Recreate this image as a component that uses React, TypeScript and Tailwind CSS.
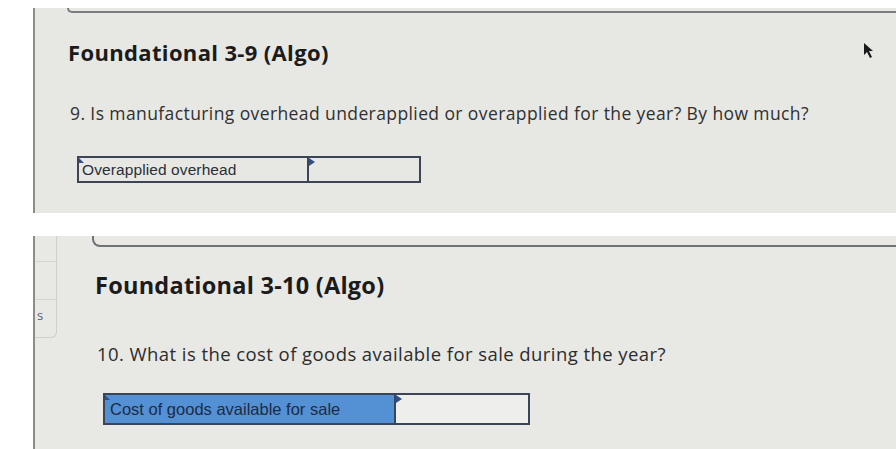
const font = { fontFamily: '"Open Sans", Lato, Arial, sans-serif' };

function AnswerRow({
  label,
  labelWidth,
  valueWidth,
  highlighted,
  size,
}: {
  label: string;
  labelWidth: string;
  valueWidth: string;
  highlighted?: boolean;
  size: string;
}) {
  return (
    <div className="flex border-2 border-[#3b4556]">
      <div
        className={`relative flex items-center pl-[3px] ${labelWidth} ${size} ${
          highlighted ? 'bg-[#5490d4] pl-[5px] text-[#1d2b44]' : 'text-[#2a2f38]'
        }`}
        style={{ fontFamily: '"Liberation Sans", Arial, sans-serif' }}
      >
        <span className="absolute left-0 top-0 h-0 w-0 border-l-[5px] border-t-[5px] border-l-[#2f4f8a] border-t-transparent" />
        {label}
      </div>
      <div className={`relative border-l-2 border-[#3b4556] ${valueWidth} ${highlighted ? 'bg-[#eeeeec]' : ''}`}>
        <span className="absolute left-0 top-0 h-0 w-0 border-b-[4px] border-l-[6px] border-t-[4px] border-b-transparent border-l-[#2f4f8a] border-t-transparent" />
      </div>
    </div>
  );
}

export default function App() {
  return (
    <div className="relative flex h-[449px] w-[896px] flex-col overflow-hidden bg-white" style={font}>
      {/* first question */}
      <section className="ml-[33px] mt-[8px] flex h-[205px] flex-col border-l-2 border-[#8c8c8a] bg-[#e7e7e3]">
        <div className="ml-[32px] h-[5px] rounded-bl-[7px] border-b-2 border-l-2 border-[#7b7d80]" />
        <h2 className="ml-[33px] mt-[26px] text-[22px] font-bold leading-[26px] tracking-[0.35px] text-[#1b1b1b]">
          Foundational 3-9 (Algo)
        </h2>
        <p className="ml-[35px] mt-[38px] text-[17.5px] leading-[20px] tracking-[0.4px] text-[#303030]">
          9. Is manufacturing overhead underapplied or overapplied for the year? By how much?
        </p>
        <div className="ml-[42px] mt-[33px] flex">
          <AnswerRow
            label="Overapplied overhead"
            labelWidth="w-[228px] h-[23px]"
            valueWidth="w-[112px]"
            size="text-[15.5px] tracking-[0.1px]"
          />
        </div>
      </section>

      {/* second question */}
      <section className="ml-[33px] mt-[23px] flex h-[213px] border-l-2 border-[#8c8c8a] bg-[#e8e8e5]">
        <div className="flex h-[102px] w-[22px] flex-col rounded-br-[6px] border-b border-r border-[#cfcfcc]">
          <div className="h-[26px] border-b border-[#d4d4d1]" />
          <div className="h-[38px] border-b border-[#d4d4d1]" />
          <div className="flex h-[36px] items-start pl-[2px] pt-[8px] text-[13px] leading-[14px] text-[#5a6070]">
            s
          </div>
        </div>
        <div className="flex flex-1 flex-col">
          <div className="ml-[35px] h-[11px] rounded-bl-[8px] border-b-2 border-l-2 border-[#6f7277]" />
          <h2 className="ml-[38px] mt-[24px] text-[23.5px] font-bold leading-[28px] tracking-[0.25px] text-[#1b1b1b]">
            Foundational 3-10 (Algo)
          </h2>
          <p className="ml-[40px] mt-[44px] text-[18.5px] leading-[22px] tracking-[0.43px] text-[#2c2c2c]">
            10. What is the cost of goods available for sale during the year?
          </p>
          <div className="ml-[46px] mt-[28px] flex">
            <AnswerRow
              label="Cost of goods available for sale"
              labelWidth="w-[289px] h-[28px]"
              valueWidth="w-[134px]"
              highlighted
              size="text-[16.5px]"
            />
          </div>
        </div>
      </section>

      {/* mouse pointer */}
      <svg className="absolute left-[863px] top-[42px]" width="12" height="18" viewBox="0 0 12 18">
        <path d="M1 1 L1 13 L4 10 L7 16 L9 15 L6 9 L10 9 Z" fill="#1a1a1a" />
      </svg>
    </div>
  );
}
